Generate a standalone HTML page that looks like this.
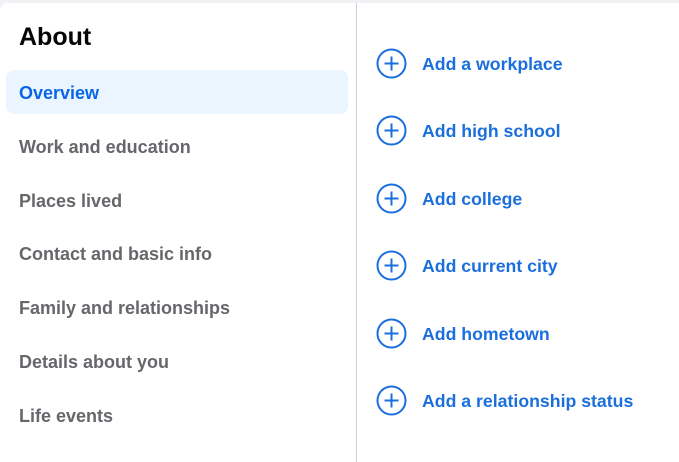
<!DOCTYPE html>
<html><head><style>
body{margin:0;background:#f0f2f5;width:679px;height:462px;overflow:hidden;font-family:"Liberation Sans",sans-serif}
.card{position:absolute;left:0;top:3px;width:679px;height:459px;background:#fff;border-top-left-radius:8px}
.div{position:absolute;left:356px;top:3px;width:1px;height:459px;background:#ced0d4}
h1{position:absolute;left:19px;top:21px;margin:0;font-size:25px;font-weight:700;color:#050505;line-height:32px}
.sel{position:absolute;left:6px;top:70px;width:342px;height:44px;background:#ebf5ff;border-radius:8px}
.li{position:absolute;left:19px;font-size:18px;font-weight:600;color:#65676b;line-height:20px}
.ri{position:absolute;left:422px;font-size:17.7px;font-weight:600;color:#1b6fdc;line-height:20px}
svg{position:absolute;left:376px}
</style></head><body>
<div class="card"></div><div class="div"></div>
<h1>About</h1>
<div class="sel"></div>
<div class="li" style="top:83px;color:#0a66e4">Overview</div>
<div class="li" style="top:137px">Work and education</div>
<div class="li" style="top:191px">Places lived</div>
<div class="li" style="top:244px">Contact and basic info</div>
<div class="li" style="top:298px">Family and relationships</div>
<div class="li" style="top:352px">Details about you</div>
<div class="li" style="top:406px">Life events</div>
<svg style="top:48px" width="31" height="31" viewBox="0 0 31 31"><circle cx="15.5" cy="15.5" r="14" fill="none" stroke="#1b6fdc" stroke-width="2"/><path d="M15.5 8.5v14M8.5 15.5h14" stroke="#1b6fdc" stroke-width="2"/></svg>
<div class="ri" style="top:54px">Add a workplace</div>
<svg style="top:115px" width="31" height="31" viewBox="0 0 31 31"><circle cx="15.5" cy="15.5" r="14" fill="none" stroke="#1b6fdc" stroke-width="2"/><path d="M15.5 8.5v14M8.5 15.5h14" stroke="#1b6fdc" stroke-width="2"/></svg>
<div class="ri" style="top:121px">Add high school</div>
<svg style="top:183px" width="31" height="31" viewBox="0 0 31 31"><circle cx="15.5" cy="15.5" r="14" fill="none" stroke="#1b6fdc" stroke-width="2"/><path d="M15.5 8.5v14M8.5 15.5h14" stroke="#1b6fdc" stroke-width="2"/></svg>
<div class="ri" style="top:189px">Add college</div>
<svg style="top:250px" width="31" height="31" viewBox="0 0 31 31"><circle cx="15.5" cy="15.5" r="14" fill="none" stroke="#1b6fdc" stroke-width="2"/><path d="M15.5 8.5v14M8.5 15.5h14" stroke="#1b6fdc" stroke-width="2"/></svg>
<div class="ri" style="top:256px">Add current city</div>
<svg style="top:318px" width="31" height="31" viewBox="0 0 31 31"><circle cx="15.5" cy="15.5" r="14" fill="none" stroke="#1b6fdc" stroke-width="2"/><path d="M15.5 8.5v14M8.5 15.5h14" stroke="#1b6fdc" stroke-width="2"/></svg>
<div class="ri" style="top:324px">Add hometown</div>
<svg style="top:385px" width="31" height="31" viewBox="0 0 31 31"><circle cx="15.5" cy="15.5" r="14" fill="none" stroke="#1b6fdc" stroke-width="2"/><path d="M15.5 8.5v14M8.5 15.5h14" stroke="#1b6fdc" stroke-width="2"/></svg>
<div class="ri" style="top:391px">Add a relationship status</div>
</body></html>
